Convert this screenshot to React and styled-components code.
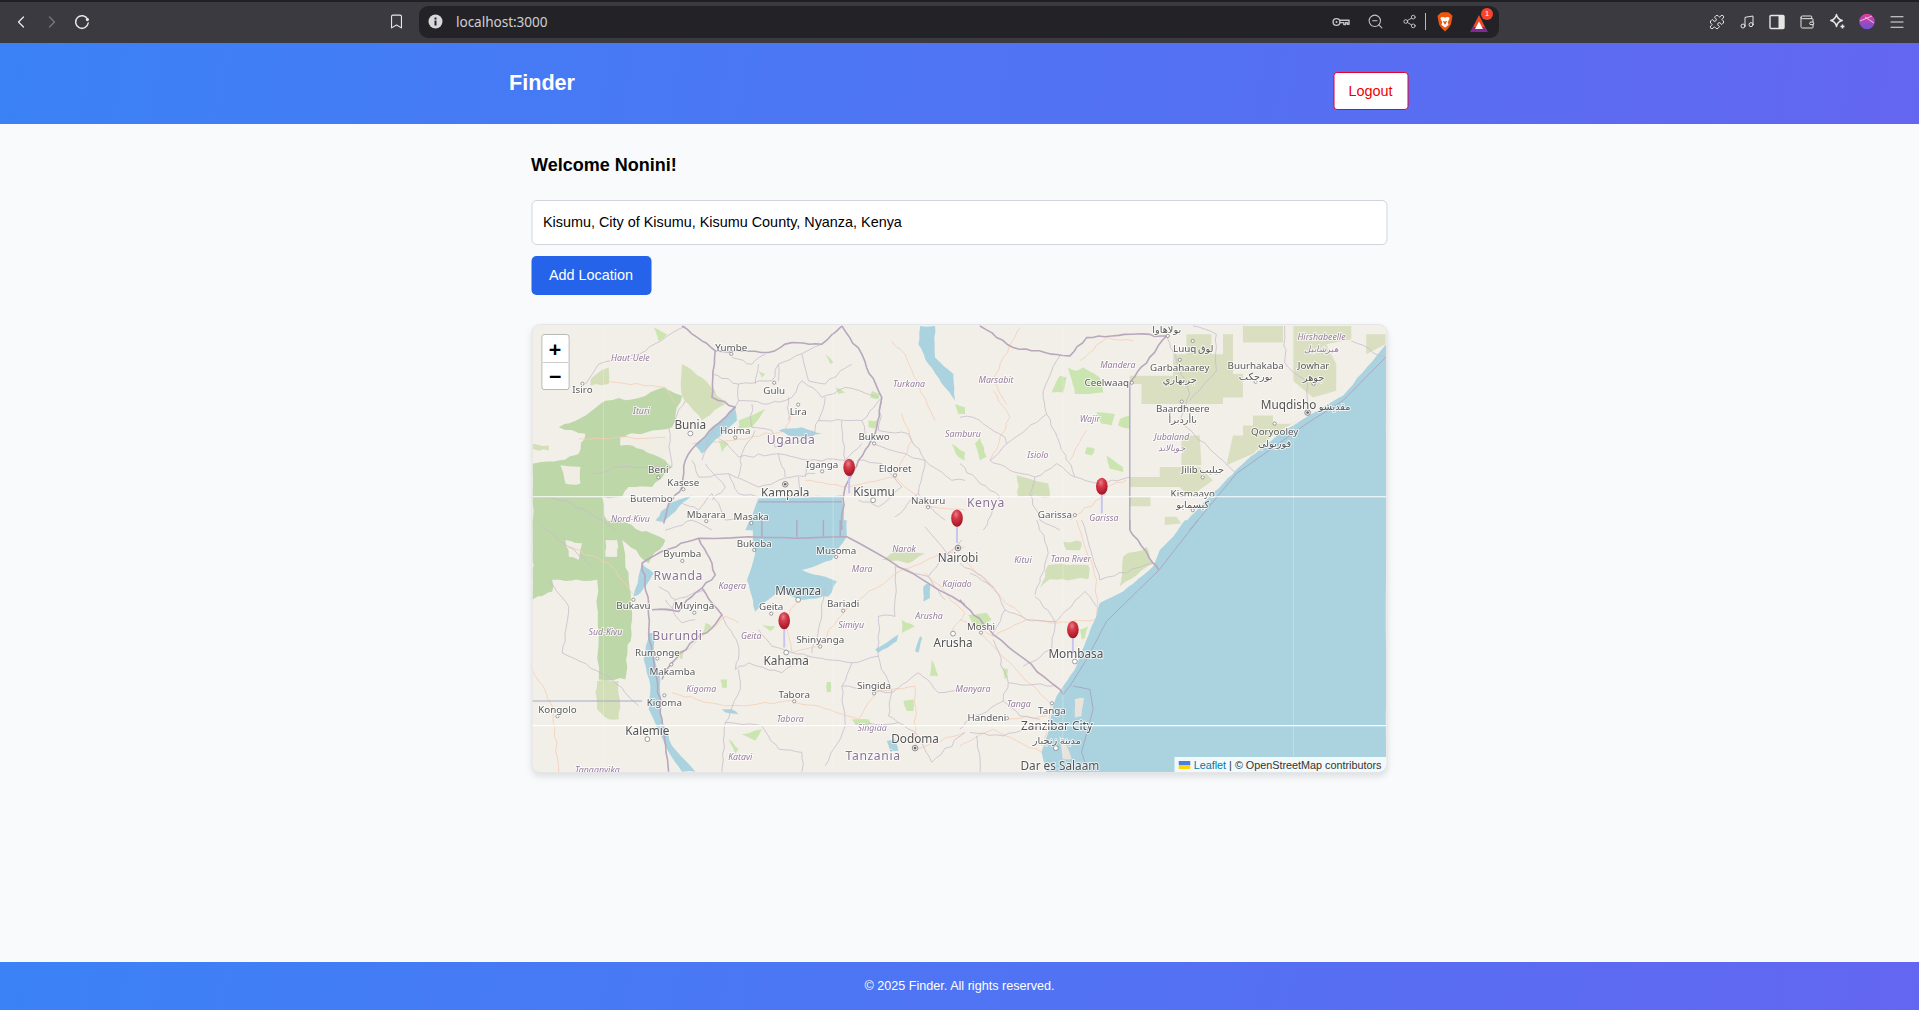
import React from "react";
import styled, { createGlobalStyle } from "styled-components";
import { ChevronLeft, ChevronRight, Bookmark, ZoomOut, Share2, Puzzle, Music, Wallet, Menu } from "lucide-react";

const Global = createGlobalStyle`
  html, body { margin: 0; padding: 0; height: 100%; background: #f9fafb; }
  * { box-sizing: border-box; }
  #root { height: 100%; }
`;

const Page = styled.div`
  height: 1010px; display: flex; flex-direction: column; overflow: hidden;
  font-family: "Liberation Sans", Arial, sans-serif; color: #000;
`;
const Chrome = styled.div`
  height: 43px; flex: none; display: flex; align-items: center; position: relative;
  background: #3a3a40; border-top: 2px solid #202024; color: #e6e6e6; padding-right: 11px;
`;
const NavGroup = styled.div`
  display: flex; align-items: center; gap: 10.5px; padding-left: 11px; width: 386px; margin-top: -2px;
`;
const IconSlot = styled.span`
  width: ${p => p.$w || 20}px; height: 20px; display: flex; align-items: center; justify-content: center; flex: none;
  color: ${p => p.$dim ? "#77777c" : "inherit"};
`;
const BookmarkSlot = styled(IconSlot)` margin-right: 13px; margin-top: -2px; `;
const UrlBar = styled.div`
  width: 1080px; height: 32px; margin-top: -2px; flex: none; background: #232327; border-radius: 9px;
  display: flex; align-items: center; padding: 0 10px 0 6px; gap: 11px;
`;
const UrlText = styled.span`
  flex: 1; font: 13.6px "Noto Sans", "Open Sans", sans-serif; color: #cfcfd2; letter-spacing: -0.05px;
`;
const UrlIcons = styled.div`
  display: flex; align-items: center; gap: 14px; color: #c4c4c8;
`;
const Sep = styled.span` width: 1px; height: 17px; background: #b9b9bd; margin: 0 -5px 0 -8px; `;
const ExtGroup = styled.div`
  margin-left: auto; margin-right: 1px; margin-top: -2px; display: flex; align-items: center; gap: 10px;
`;
const Bar = styled.div`
  background: linear-gradient(100deg, #3b82f6, #6366f1); color: #fff; flex: none;
`;
const Header = styled(Bar)` height: 81px; `;
const HeaderInner = styled.div`
  width: 900px; height: 100%; margin: 0 auto; display: flex; align-items: center; justify-content: space-between; padding-right: 2px;
  transform: translateX(-0.5px);
`;
const Brand = styled.div` font-size: 21.6px; font-weight: 700; margin-top: -2px; `;
const Logout = styled.button`
  width: 75px; height: 38px; margin-top: 14px; margin-right: -1px; background: #fff; color: #f00000;
  border: 1px solid #e8002a; border-radius: 3.6px; font: 14.4px "Liberation Sans", Arial, sans-serif; padding: 0;
`;
const Main = styled.main`
  flex: 1; width: 856px; margin: 0 auto; padding-top: 31px; transform: translateX(-0.5px);
`;
const Title = styled.h2` margin: 0; font-size: 18px; line-height: 21px; font-weight: 700; `;
const Input = styled.input`
  display: block; width: 100%; height: 45px; margin-top: 24px; padding: 0 11px 2px; background: #fff;
  border: 1px solid #d1d5db; border-radius: 5.4px; font: 14.4px "Liberation Sans", Arial, sans-serif; color: #000; outline: 0;
`;
const AddButton = styled.button`
  display: block; width: 120px; height: 39px; margin-top: 11px; background: #2563eb; color: #fff; border: 0;
  border-radius: 5px; font: 14.4px "Liberation Sans", Arial, sans-serif; padding: 0 0 2px;
`;
const MapBox = styled.div`
  position: relative; height: 449px; margin-top: 29px; overflow: hidden; border-radius: 9px;
  border: 1px solid #e3e5e8; box-shadow: 0 3.6px 6px rgba(0,0,0,.1); background: #f2efe9;
`;
const MapSvg = styled.svg` display: block; width: 100%; height: 100%; filter: blur(0.35px); `;
const Zoom = styled.div`
  position: absolute; left: 9px; top: 9px; width: 28px; border-radius: 3.6px; overflow: hidden;
  background: #fff; border: 1px solid rgba(0,0,0,.28);
`;
const ZoomBtn = styled.div`
  height: 27px; display: flex; align-items: center; justify-content: center; background: #fff; color: #000;
  font: 700 20px "DejaVu Sans Mono", "Liberation Mono", monospace;
  & + & { border-top: 1px solid #ccc; }
`;
const Attribution = styled.div`
  position: absolute; right: 0; bottom: 0; height: 15px; padding: 0 4.5px; display: flex; align-items: center; gap: 3px;
  background: rgba(255,255,255,.85); font-size: 10.8px; color: #333;
`;
const LeafletLink = styled.a` color: #0078a8; `;
const Footer = styled(Bar)`
  height: 48px; display: flex; align-items: center; justify-content: center; font-size: 12.6px; padding-bottom: 1px;
`;

const Label = styled.text`
  font-family: "Noto Sans", "DejaVu Sans", sans-serif; text-anchor: middle; paint-order: stroke;
  stroke: rgba(255,255,255,.7); stroke-width: 2px; stroke-linejoin: round;
  font-size: ${p => ({ city: 9.8, big: 11.8, region: 8.8, country: 12.2 }[p.$k])}px;
  font-style: ${p => p.$k === "region" ? "italic" : "normal"};
  fill: ${p => ({ city: "#5a5a5a", big: "#525252", region: "#977c9c", country: "#8a7193" }[p.$k])};
  letter-spacing: ${p => p.$k === "country" ? ".6px" : "0"};
`;

const O = { 4: [525, 320], 5: [960, 320], 6: [525, 520], 7: [960, 520] };
const rnd = n => { const v = Math.sin(n * 12.9898) * 43758.5453; return v - Math.floor(v) - 0.5; };
let seed = 1;
const pts = (z, s, amp = 0, closed = false) => {
  const list = s.trim().split(/\s+/).map(p => { const [x, y] = p.split(",").map(Number); return [O[z][0] + x / 3, O[z][1] + y / 3]; });
  const out = [];
  const n = closed ? list.length : list.length - 1;
  for (let i = 0; i < n; i++) {
    const a = list[i], b = list[(i + 1) % list.length];
    out.push(a);
    const len = Math.hypot(b[0] - a[0], b[1] - a[1]);
    const steps = amp ? Math.min(8, Math.floor(len / 7)) : 0;
    for (let k = 1; k <= steps; k++) {
      const t = k / (steps + 1);
      const env = Math.sin(Math.PI * t) * 0.6 + 0.4;
      out.push([a[0] + (b[0] - a[0]) * t + rnd(seed++) * amp * 2 * env, a[1] + (b[1] - a[1]) * t + rnd(seed++) * amp * 2 * env]);
    }
  }
  if (!closed) out.push(list[list.length - 1]);
  return out.map(p => `${p[0].toFixed(1)},${p[1].toFixed(1)}`).join(" ");
};

const forests = [
  [4, "100,320 170,290 240,240 340,232 415,200 470,225 440,320 380,330 300,345 380,370 420,420 440,440 380,500 310,500 290,530 230,530 250,630 20,630 20,430 100,420 160,400 180,340"],
  [6, "20,0 280,0 420,60 370,130 290,60 310,180 320,300 300,480 220,480 215,180 80,180 80,215 20,240"],
];
const holes = [
  [4, "105,435 165,440 165,490 120,490"], [4, "285,350 435,350 420,420 320,375 285,375"], [6, "240,60 275,60 275,110 240,110"], [6, "120,60 170,70 160,120 130,110"],
];
const lightForests = [
  [6, "215,485 280,485 280,600 250,600 215,570"],
  [4, "470,130 530,170 600,250 530,300 470,225"],
  [4, "200,170 250,140 250,190 195,195"],
  [5, "170,465 265,490 270,530 175,530"],
  [7, "265,135 385,135 385,178 270,178 240,205"],
  [7, "310,65 365,65 360,90 320,90"],
  [7, "490,110 560,80 580,130 480,200"],
  [6, "1070,120 1110,90 1200,100 1150,130 1080,120"],
  [4, "20,370 70,375 70,390 20,385"],
];
const somali = [
  [5, "680,40 755,40 755,100 790,100 790,40 820,40 820,160 850,160 850,230 790,230 790,250 545,250 545,190 510,190 510,165 640,165 640,100 680,100"],
  [5, "850,15 970,15 970,65 850,65"],
  [5, "1000,15 1175,15 1175,55 1100,70 1130,130 1130,210 1060,230 1000,180 1000,65"],
  [5, "1220,40 1278,40 1278,70 1220,100"],
  [5, "880,285 940,285 940,310 1000,310 1020,295 940,345 880,400 800,435 820,345 850,345 850,315 880,315"],
  [5, "665,345 720,345 725,435 665,435"],
  [5, "600,440 720,440 760,480 690,530 660,500 510,500 510,470 600,470"],
  [5, "510,530 572,530 572,558 510,558"],
  [5, "615,590 650,590 665,610 615,615"],
];
const parks = [
  [5, "300,165 320,170 310,215 275,215"], [5, "325,140 350,150 370,140 420,170 430,215 380,220 345,220 335,175"],
  [5, "380,380 405,385 395,405 375,400"], [5, "410,275 465,280 455,315 425,310"], [5, "480,295 510,285 510,325 475,315"],
  [5, "440,405 490,440 490,455 450,445"], [5, "60,350 80,410 60,420 45,370"], [6, "710,315 750,320 735,335"], [6, "585,480 605,480 605,505 590,505"],
  [6, "905,488 917,488 917,518 905,518"], [6, "1135,545 1165,540 1165,575 1145,575"], [6, "610,660 640,690 630,705"], [6, "650,645 710,630 690,665"],
  [6, "980,600 1030,600 1040,615 990,615"], [4, "640,300 720,265 680,320 640,325"], [4, "1040,210 1065,220 1060,235 1035,230"], [4, "1030,300 1060,300 1050,325 1030,320"],
  [4, "900,100 925,125 915,130"], [4, "1290,250 1320,260 1320,280 1300,280"], [4, "1280,370 1320,395 1320,420 1300,410"], [7, "25,285 80,280 95,300 50,330"],
  [7, "360,330 385,320 375,355 365,360"], [7, "125,445 145,450 140,470"], [4, "385,20 425,40 400,60"], [4, "580,360 610,370 590,395"], [4, "700,150 720,160 710,170"], [4, "930,200 960,215 940,220"],
  [6, "540,310 560,320 530,345"], [6, "440,400 480,390 470,420"], [6, "1130,300 1170,320 1130,340"], [6, "1220,420 1240,470 1215,470"], [7, "130,450 145,470 135,480"],
];
const water = [
  [4, "700,535 950,525 960,630 660,630"],
  [6, "680,0 965,0 965,50 920,120 830,150 935,185 910,230 820,240 760,210 690,275 680,230 665,180 690,100"],
  [4, "630,255 510,375 530,400 635,300"],
  [6, "370,340 355,420 375,500 370,570 420,680 470,758 510,758 440,680 405,580 405,480 385,400 385,340"],
  [6, "350,130 325,230 345,220 385,160"],
  [4, "1185,20 1180,70 1210,130 1260,200 1290,240 1285,160 1230,110 1230,15 1185,15"],
  [4, "390,600 430,550 500,525 460,560 415,605"],
  [4, "760,330 830,320 890,340 840,350 790,345"],
  [6, "1050,390 1120,345 1115,365 1060,400"], [6, "1170,395 1185,350 1192,355 1180,400"], [6, "1085,665 1110,660 1120,695 1095,695"],
  [6, "1195,200 1215,190 1215,235 1195,245"], [6, "590,570 620,570 640,585 600,580"],
];
const ocean = [
  [5, "1280,70 1150,225 1040,290 960,340 860,420 790,490 720,560 655,630 1280,630"],
  [7, "675,0 640,50 600,90 580,140 490,215 420,250 405,300 380,360 345,450 310,500 290,530 280,560 265,640 245,700 260,760 1280,760 1280,0"],
];
const islands = [[7, "345,540 372,535 365,590 345,595"], [7, "298,650 310,720 335,720 320,680"]];
const countries = [
  [4, "470,15 530,60 570,90 730,95 800,65 890,70 950,15"],
  [4, "570,90 560,230 630,260 510,375 480,420 470,500 430,550 415,610"],
  [4, "950,15 1010,100 1070,230 1050,340 1000,420 960,500 950,630"],
  [5, "60,15 160,80 330,105 380,50 515,40 620,45 510,185"],
  [7, "510,30 580,130 598,150"],
  [6, "420,90 520,55 965,50"], [6, "965,50 1320,255"],
  [7, "0,240 100,345 300,510 310,525"],
  [6, "520,55 560,130 570,165 530,205 590,285 560,325 510,360 440,430 410,480"],
  [6, "420,90 350,130 370,250 370,340 395,480 410,600 430,758"],
  [6, "380,270 460,275 500,230 530,205"],
];
const straight = [
  [5, "510,185 510,630"], [7, "510,0 510,30"],
  [6, "710,0 710,50"], [6, "815,0 815,50"], [6, "895,0 895,50"], [6, "945,0 945,50"],
  [4, "700,545 950,545"],
];
const maritime = [
  [5, "1278,110 1150,240 1040,310 830,460 690,630"],
  [7, "715,0 598,150 440,305 380,420 330,500 310,525"],
  [7, "340,500 390,510 400,570 365,700 385,758"],
  [6, "20,545 350,545"],
];
const regions = [
  [4, "560,160 640,190 740,180 760,130 890,70"], [4, "640,190 640,240 730,250 800,230 830,180 890,230 960,200 1060,230"],
  [4, "680,250 680,320 740,330 750,380 860,350 880,300 1010,300 1070,230"], [4, "560,330 640,410 760,400 850,420 960,420 1010,370"],
  [4, "500,420 520,470 610,460 700,500 800,470 870,460"], [4, "610,460 640,520 700,530"], [4, "460,540 520,570 560,520"],
  [4, "1010,300 1020,340 1045,370"], [4, "420,630 500,600 560,630"], [4, "640,240 600,300"], [4, "760,130 760,180"], [4, "790,300 790,230"],
  [4, "180,190 220,130 340,100 480,15"], [4, "20,530 120,540 230,600 270,630"], [4, "480,240 430,320 440,440"], [4, "200,460 280,440 440,440"],
  [4, "1070,230 1060,330 1150,340 1200,420 1280,480 1320,480"], [4, "1045,370 1100,390 1200,420"], [4, "540,430 600,500 560,540"], [4, "820,470 830,530 900,530"],
  [4, "620,110 680,130 720,100"], [4, "700,130 690,190"], [4, "830,100 850,180 900,190"], [4, "900,190 980,130"], [4, "600,300 560,330 530,420"], [4, "880,300 900,230"], [4, "950,300 960,420"],
  [4, "650,400 640,470"], [4, "760,400 780,470"], [4, "850,420 840,470"], [4, "690,330 650,400"], [4, "1000,420 1070,430 1130,500"], [4, "1130,500 1060,560 1000,540"], [4, "1200,420 1180,520 1110,590"],
  [4, "1180,520 1260,600"], [4, "560,520 600,600 660,590"],
  [5, "300,105 250,210 260,280 140,370 90,420 150,450 225,470 290,430 345,470 420,490 510,470"], [5, "260,280 300,370 345,470"], [5, "0,290 40,290 135,350 140,370"],
  [5, "225,470 210,520 240,600 300,630"], [5, "0,430 60,490"], [5, "620,45 690,220 660,300 830,460"], [5, "975,15 975,125 1045,190 1045,250"], [5, "700,15 770,40 770,150 690,240"], [5, "1175,60 1278,110"],
  [5, "60,490 120,530 70,630"],
  [6, "590,285 640,380 630,450 670,430 770,460 850,410 980,430 1060,410 1060,290 1110,290 1110,140"], [6, "640,450 645,510 600,610 710,620 760,690 830,700 830,758"],
  [6, "980,430 950,500 960,620 900,740"], [6, "1060,410 1100,520 1180,460 1240,520 1320,510"], [6, "960,620 1120,610"], [6, "1100,520 1090,590 1120,610"], [6, "600,610 590,758"], [6, "950,500 1100,520"],
  [6, "400,200 450,240 540,210"], [6, "450,240 440,270 390,270"], [6, "70,180 130,260 110,400 250,470 340,560"], [6, "200,140 130,80 50,20"], [6, "1120,610 1180,650 1220,730 1320,640"], [6, "900,200 880,330 860,400"], [6, "700,330 740,380 850,410"],
  [6, "1110,140 1210,170 1310,60"], [6, "1210,170 1260,240"], [6, "420,240 470,310 510,300"], [6, "1200,20 1290,130"],
  [7, "30,160 100,200 135,270 200,300 290,305 375,215 410,260"], [7, "135,270 100,340"], [7, "225,230 285,305 275,390 190,440"], [7, "0,130 50,160 100,205"], [7, "230,0 265,100 225,225"],
  [7, "365,0 420,180 580,130"], [7, "100,360 145,490 130,545 30,600 0,630"], [7, "145,490 280,500"], [7, "130,545 180,590 240,600"], [7, "30,640 130,650 240,620"], [7, "50,650 60,760"],
];
const roads = [
  [4, "160,355 420,350"], [4, "1110,470 1160,360 1130,280"], [4, "970,500 1110,470 1210,560"], [4, "840,480 970,500"], [4, "500,370 620,360 780,330 800,270"], [4, "1200,560 1320,570"],
  [4, "450,250 420,200 230,180"], [4, "1100,60 1140,100 1230,300"], [6, "640,310 600,290 520,360 440,430"], [6, "820,240 780,300 800,400 880,380 960,270"], [6, "810,550 880,560 1000,600 1050,520"],
  [6, "440,520 600,560 810,545"], [6, "1050,520 1170,500 1170,690"], [6, "1170,690 1320,640"], [6, "960,270 1130,150 1320,80"], [6, "1280,340 1320,280 1200,160"], [6, "20,450 80,560 100,760"], [6, "130,80 250,130 330,230"],
  [7, "0,300 100,350 200,300 290,310 410,300"], [7, "0,100 100,210 200,300"], [7, "350,0 410,180 410,300"], [7, "60,340 270,550"], [7, "275,550 260,640 245,700"], [7, "140,600 260,590"], [7, "0,680 100,630 245,700"],
  [5, "360,120 440,50 520,60"], [5, "100,210 150,290 90,420"], [5, "330,420 380,330"], [5, "440,500 500,480"], [5, "330,600 440,520"], [5, "180,20 130,110 100,180 140,250"],
];

const labels = [
  ["Haut-Uele", 630, 360, "region"], ["Yumbe", 731, 350, "city"], ["Isiro", 582, 392, "city"], ["Gulu", 774, 393, "city"], ["Turkana", 909, 386, "region"],
  ["Ituri", 641, 413, "region"], ["Lira", 798, 414, "city"], ["Bunia", 690, 428, "big"], ["Hoima", 735, 434, "city"], ["Uganda", 791, 444, "country"],
  ["Bukwo", 874, 440, "city"], ["Iganga", 822, 468, "city"], ["Eldoret", 895, 472, "city"], ["Beni", 658, 473, "city"], ["Kasese", 683, 486, "city"],
  ["Kampala", 785, 497, "big"], ["Kisumu", 874, 496, "big"], ["Butembo", 651, 502, "city"], ["Nakuru", 928, 504, "city"], ["Mbarara", 706, 518, "city"],
  ["Masaka", 751, 520, "city"], ["Nord-Kivu", 630, 522, "region"], ["Samburu", 963, 437, "region"],
  ["بولاهاوا", 1167, 332, "city"], ["Luuq", 1185, 351, "city"], ["لوق", 1206, 351, "city"], ["Hirshabeelle", 1322, 339, "region"], ["هيرشابيل", 1322, 351, "region"],
  ["Mandera", 1118, 367, "region"], ["Garbahaarey", 1180, 370, "city"], ["جربهاري", 1180, 382, "city"], ["Buurhakaba", 1256, 368, "city"], ["بورجكب", 1256, 379, "city"],
  ["Jowhar", 1314, 368, "city"], ["جوهر", 1314, 380, "city"], ["Marsabit", 996, 382, "region"], ["Ceelwaaq", 1107, 385, "city"], ["Baardheere", 1183, 411, "city"],
  ["باأردبرأ", 1183, 422, "city"], ["Muqdisho", 1289, 408, "big"], ["مقديشو", 1335, 409, "city"], ["Wajir", 1090, 421, "region"], ["Qoryooley", 1275, 435, "city"],
  ["فوريولي", 1275, 447, "city"], ["Jubaland", 1172, 440, "region"], ["جوبالاند", 1172, 451, "region"], ["Isiolo", 1038, 458, "region"], ["Jilib", 1190, 473, "city"],
  ["جيليب", 1212, 473, "city"], ["Kismaayo", 1193, 497, "city"], ["كيسمايو", 1193, 508, "city"], ["Kenya", 986, 507, "country"], ["Garissa", 1055, 518, "city"], ["Garissa", 1104, 521, "region"],
  ["Bukoba", 754, 547, "city"], ["Byumba", 682, 557, "city"], ["Musoma", 836, 554, "city"], ["Narok", 904, 552, "region"], ["Nairobi", 958, 562, "big"], ["Mara", 862, 572, "region"],
  ["Rwanda", 678, 580, "country"], ["Kagera", 732, 589, "region"], ["Kajiado", 957, 587, "region"], ["Mwanza", 798, 595, "big"], ["Bukavu", 633, 609, "city"], ["Muyinga", 694, 609, "city"],
  ["Geita", 771, 610, "city"], ["Bariadi", 843, 607, "city"], ["Arusha", 929, 619, "region"], ["Simiyu", 851, 628, "region"], ["Sud-Kivu", 605, 635, "region"], ["Burundi", 677, 640, "country"],
  ["Geita", 751, 639, "region"], ["Shinyanga", 820, 643, "city"], ["Arusha", 953, 647, "big"], ["Rumonge", 657, 656, "city"], ["Kahama", 786, 666, "big"], ["Makamba", 672, 676, "city"],
  ["Kigoma", 701, 693, "region"], ["Singida", 874, 690, "city"], ["Tabora", 794, 699, "city"], ["Kigoma", 664, 707, "city"], ["Kongolo", 557, 714, "city"], ["Tabora", 790, 723, "region"],
  ["Kalemie", 647, 736, "big"], ["Singida", 872, 732, "region"], ["Dodoma", 915, 744, "big"], ["Katavi", 740, 761, "region"], ["Tanzania", 873, 761, "country"], ["Tanganyika", 597, 774, "region"],
  ["Moshi", 981, 630, "city"], ["Manyara", 973, 693, "region"], ["Kitui", 1023, 563, "region"], ["Tana River", 1071, 562, "region"], ["Mombasa", 1076, 658, "big"], ["Tanga", 1019, 708, "region"],
  ["Tanga", 1052, 715, "city"], ["Handeni", 987, 722, "city"], ["Zanzibar City", 1057, 731, "big"], ["مدينة زنجبار", 1057, 745, "city"], ["Dar es Salaam", 1060, 771, "big"],
];
const dots = [
  [731, 353], [582, 383], [774, 382], [798, 404], [690, 433, 2.4], [735, 437], [874, 443], [822, 471], [895, 475], [658, 477], [683, 489], [873, 500, 2.4], [928, 507],
  [706, 521], [751, 523], [1168, 335], [1193, 340], [1180, 359], [1256, 381], [1314, 383], [1132, 382], [1182, 401], [1275, 423], [1203, 477], [1193, 510], [1075, 515],
  [754, 550], [682, 561], [836, 557], [798, 600, 2.4], [771, 614], [843, 611], [633, 600], [694, 613], [820, 647], [953, 634, 2.4], [786, 653, 2.4], [657, 659], [671, 665], [664, 696],
  [874, 694], [794, 702], [557, 717], [647, 740, 2.4], [981, 633], [1075, 662, 2.4], [1052, 704], [1007, 719], [1056, 749, 2.4],
];
const capitals = [[785, 484], [958, 548], [1308, 412], [915, 749]];
const pins = [[849, 467, 493], [957, 518, 543], [1102, 486, 513], [784, 621, 648], [1073, 630, 653]];
const seams = [603, 833, 1063, 1294];

const Shapes = ({ list, amp = 0, ...rest }) => list.map(([z, s], i) => <polygon key={i} points={pts(z, s, amp, true)} {...rest} />);
const Lines = ({ list, amp = 0, ...rest }) => list.map(([z, s], i) => <polyline key={i} points={pts(z, s, amp)} fill="none" strokeLinejoin="round" {...rest} />);

const MapDrawing = () => {
  seed = 1;
  return (
    <MapSvg viewBox="532 324 855 449" preserveAspectRatio="none">
      <defs>
        <radialGradient id="pinFill" cx="42%" cy="28%" r="75%">
          <stop offset="0" stopColor="#e8808c" />
          <stop offset=".35" stopColor="#d63a4a" />
          <stop offset="1" stopColor="#a0111f" />
        </radialGradient>
      </defs>
      <rect x="532" y="324" width="855" height="449" fill="#f2efe9" />
      <Shapes list={somali} fill="#d9dfc0" />
      <Shapes list={lightForests} fill="#d3dfb8" amp={1.6} />
      <Shapes list={forests} fill="#bdd7a8" amp={1.8} />
      <Shapes list={holes} fill="#f0ede4" amp={1.2} />
      <Shapes list={parks} fill="#cbe5b0" amp={.8} />
      <Lines list={roads} stroke="#f6cdb4" strokeWidth=".8" amp={1.5} />
      <Shapes list={ocean} fill="#aad3df" amp={.5} />
      <Shapes list={water} fill="#aad3df" amp={1} />
      <Shapes list={islands} fill="#e9e3dc" amp={.6} />
      <Lines list={regions} stroke="#c9bccb" strokeWidth=".8" amp={1.6} />
      <Lines list={maritime} stroke="#a7a9c4" strokeWidth="1" />
      <Lines list={countries} stroke="#b8a7bd" strokeWidth="1.6" amp={1.3} />
      <Lines list={straight} stroke="#b0a6c0" strokeWidth="1.4" />
      {seams.map(x => <line key={x} x1={x} x2={x} y1="324" y2="773" stroke="#fff" strokeOpacity=".32" strokeWidth=".8" />)}
      {dots.map(([x, y, r], i) => <circle key={i} cx={x} cy={y} r={r || 1.6} fill="#fff" stroke="#777" strokeWidth=".7" />)}
      {capitals.map(([x, y], i) => <g key={i}><circle cx={x} cy={y} r="2.8" fill="#eee" stroke="#666" strokeWidth=".7" /><circle cx={x} cy={y} r="1.3" fill="#666" /></g>)}
      {labels.map(([t, x, y, k], i) => <Label key={i} x={x} y={y} $k={k}>{t}</Label>)}
      <line x1="532" x2="1387" y1="496.5" y2="496.5" stroke="#fff" strokeWidth="1.2" />
      <line x1="532" x2="1387" y1="726.5" y2="726.5" stroke="#fff" strokeWidth="1.2" />
      {pins.map(([x, y, end]) => (
        <g key={x}>
          <line x1={x} x2={x} y1={y} y2={end} stroke="#c9c6ee" strokeWidth="2" />
          <ellipse cx={x} cy={y} rx="5.8" ry="8.6" fill="url(#pinFill)" />
        </g>
      ))}
    </MapSvg>
  );
};

const Reload = () => (
  <svg width="18" height="18" viewBox="0 0 18 18" fill="none" stroke="currentColor" strokeWidth="1.5">
    <path d="M14.6 6.2A6.3 6.3 0 1 0 15.2 10" strokeLinecap="round" />
    <circle cx="14.4" cy="6.6" r="1.6" fill="currentColor" stroke="none" />
  </svg>
);
const InfoDot = () => (
  <svg width="15" height="15" viewBox="0 0 15 15">
    <circle cx="7.5" cy="7.5" r="7" fill="#d8d8da" />
    <rect x="6.5" y="6.5" width="2" height="5" fill="#232327" />
    <rect x="6.5" y="3.5" width="2" height="2" fill="#232327" />
  </svg>
);
const KeyIcon = () => (
  <svg width="18" height="12" viewBox="0 0 18 12" fill="none" stroke="currentColor" strokeWidth="1.4">
    <circle cx="4.5" cy="6" r="3.4" />
    <circle cx="4.5" cy="6" r="1" fill="currentColor" stroke="none" />
    <path d="M8 4.2h9v4h-1.6V6.6h-1.8v2h-1.8V6.6H8" strokeLinejoin="round" />
  </svg>
);
const Star = () => (
  <svg width="17" height="17" viewBox="0 0 17 17" fill="none" stroke="currentColor" strokeWidth="1.4">
    <path d="M7.5 1.5c.7 3.6 2.2 5.2 5.8 6-3.6.8-5.1 2.4-5.8 6-.7-3.6-2.2-5.2-5.8-6 3.6-.8 5.1-2.4 5.8-6z" strokeLinejoin="round" />
    <path d="M13.5 11.5v4M11.5 13.5h4" strokeWidth="1.6" />
  </svg>
);
const Brave = () => (
  <svg width="16" height="20" viewBox="0 0 16 20">
    <path d="M3.4 1 5.4 .2h5.2l2 .8 1.7 1.7 1.2 1-.5 3.3-1.2 5.7-2.5 3.6L8 19.4l-3.3-3.1-2.5-3.6L1 7 .5 3.7l1.2-1z" fill="#f1560f" />
    <path d="M4 5.2 6.4 5 8 5.8 9.6 5 12 5.2l.6 1.3-1.9 3.7.9 2.5-2.2 1.7-1.4 1-1.4-1-2.2-1.7.9-2.5-1.9-3.7z" fill="#fff" />
    <path d="M6 9h1.3L8 10l.7-1H10L8.6 12.2H7.4z" fill="#f1560f" />
  </svg>
);
const BatWrap = styled.span` position: relative; width: 20px; height: 20px; display: block; `;
const Badge = styled.span`
  position: absolute; right: -4px; top: -4px; width: 12px; height: 12px; border-radius: 50%; background: #f4452c;
  color: #fff; font: 7.5px/12px "Liberation Sans", Arial, sans-serif; text-align: center;
`;
const Bat = () => (
  <BatWrap>
    <svg width="20" height="20" viewBox="0 0 20 20">
      <path d="M10 3 18 19H2z" fill="#ef4a2c" />
      <path d="M1 20 4 15h12l3 5z" fill="#7c2c8f" />
      <path d="M10 9.5 14 17H6z" fill="#fff" />
    </svg>
    <Badge>1</Badge>
  </BatWrap>
);
const SidePanel = () => (
  <svg width="16" height="16" viewBox="0 0 16 16">
    <rect x="1" y="1.5" width="14" height="13" rx="1" fill="none" stroke="#e6e6e6" strokeWidth="1.4" />
    <rect x="9.5" y="1.5" width="5.5" height="13" fill="#e6e6e6" />
  </svg>
);
const Profile = () => (
  <svg width="16" height="17" viewBox="0 0 16 17">
    <defs><linearGradient id="prof" x1="0" y1="0" x2="0" y2="1"><stop offset="0" stopColor="#e23a9a" /><stop offset="1" stopColor="#6a55d8" /></linearGradient></defs>
    <circle cx="8" cy="8.5" r="7.8" fill="url(#prof)" />
    <path d="M1 8 13 3M6 4l9 6" stroke="#f5c9e2" strokeWidth=".9" fill="none" />
  </svg>
);

const Toolbar = () => (
  <Chrome>
    <NavGroup>
      <IconSlot><ChevronLeft size={22} strokeWidth={1.6} /></IconSlot>
      <IconSlot $dim><ChevronRight size={22} strokeWidth={1.6} /></IconSlot>
      <IconSlot><Reload /></IconSlot>
    </NavGroup>
    <BookmarkSlot><Bookmark size={17} strokeWidth={1.6} /></BookmarkSlot>
    <UrlBar>
      <IconSlot><InfoDot /></IconSlot>
      <UrlText>localhost:3000</UrlText>
      <UrlIcons>
        <IconSlot><KeyIcon /></IconSlot>
        <IconSlot><ZoomOut size={17} strokeWidth={1.5} /></IconSlot>
        <IconSlot><Share2 size={15} strokeWidth={1.5} /></IconSlot>
        <Sep />
        <IconSlot><Brave /></IconSlot>
        <IconSlot><Bat /></IconSlot>
      </UrlIcons>
    </UrlBar>
    <ExtGroup>
      <IconSlot><Puzzle size={16} strokeWidth={1.5} /></IconSlot>
      <IconSlot><Music size={16} strokeWidth={1.5} /></IconSlot>
      <IconSlot><SidePanel /></IconSlot>
      <IconSlot><Wallet size={16} strokeWidth={1.5} /></IconSlot>
      <IconSlot><Star /></IconSlot>
      <IconSlot><Profile /></IconSlot>
      <IconSlot><Menu size={18} strokeWidth={1.5} /></IconSlot>
    </ExtGroup>
  </Chrome>
);

const UaFlag = () => (
  <svg width="12" height="8" viewBox="0 0 12 8"><rect width="12" height="4" fill="#4c7be1" /><rect y="4" width="12" height="4" fill="#ffd500" /></svg>
);

export default function App() {
  return (
    <Page>
      <Global />
      <Toolbar />
      <Header>
        <HeaderInner>
          <Brand>Finder</Brand>
          <Logout>Logout</Logout>
        </HeaderInner>
      </Header>
      <Main>
        <Title>Welcome Nonini!</Title>
        <Input readOnly value="Kisumu, City of Kisumu, Kisumu County, Nyanza, Kenya" />
        <AddButton>Add Location</AddButton>
        <MapBox>
          <MapDrawing />
          <Zoom>
            <ZoomBtn>+</ZoomBtn>
            <ZoomBtn>−</ZoomBtn>
          </Zoom>
          <Attribution>
            <UaFlag />
            <LeafletLink>Leaflet</LeafletLink>
            <span>| © OpenStreetMap contributors</span>
          </Attribution>
        </MapBox>
      </Main>
      <Footer>© 2025 Finder. All rights reserved.</Footer>
    </Page>
  );
}
